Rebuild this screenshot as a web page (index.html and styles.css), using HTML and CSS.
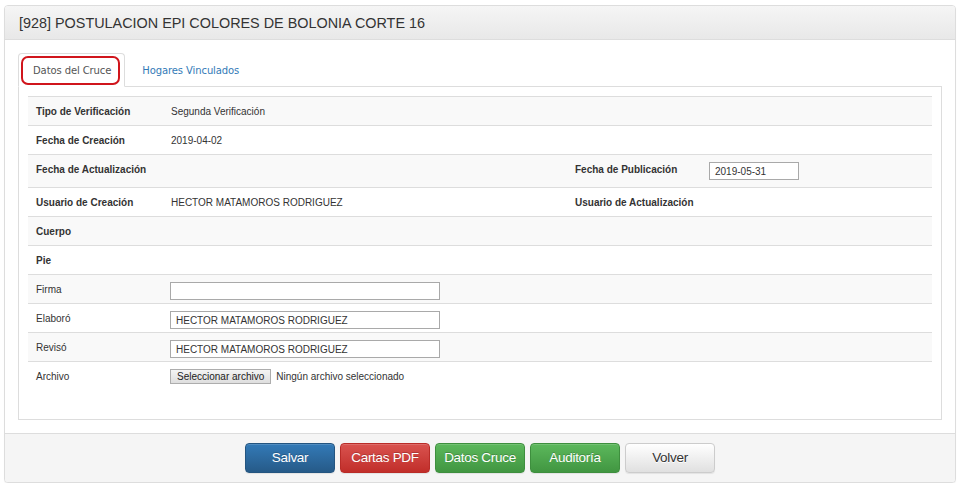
FILE: index.html
```html
<!DOCTYPE html>
<html lang="es">
<head>
<meta charset="utf-8">
<title>Postulación</title>
<link rel="stylesheet" href="styles.css">
</head>
<body>
<div class="panel">
  <div class="panel-heading">[928] POSTULACION EPI COLORES DE BOLONIA CORTE 16</div>
  <div class="panel-body">
    <ul class="tabs">
      <li class="tab active"><span class="tab-label">Datos del Cruce</span><span class="mark"></span></li>
      <li class="tab"><span class="tab-label link">Hogares Vinculados</span></li>
    </ul>
    <div class="tab-content">
      <table class="grid">
        <colgroup><col class="c1"><col class="c2"><col class="c3"><col class="c4"></colgroup>
        <tbody>
          <tr><th>Tipo de Verificación</th><td colspan="3">Segunda Verificación</td></tr>
          <tr><th>Fecha de Creación</th><td colspan="3">2019-04-02</td></tr>
          <tr class="tall"><th>Fecha de Actualización</th><td></td><th>Fecha de Publicación</th><td><input class="field date" type="text" value="2019-05-31"></td></tr>
          <tr><th>Usuario de Creación</th><td>HECTOR MATAMOROS RODRIGUEZ</td><th>Usuario de Actualización</th><td></td></tr>
          <tr><th>Cuerpo</th><td colspan="3"></td></tr>
          <tr><th>Pie</th><td colspan="3"></td></tr>
          <tr><td class="lbl">Firma</td><td colspan="3"><input class="field wide" type="text" value=""></td></tr>
          <tr><td class="lbl">Elaboró</td><td colspan="3"><input class="field wide" type="text" value="HECTOR MATAMOROS RODRIGUEZ"></td></tr>
          <tr><td class="lbl">Revisó</td><td colspan="3"><input class="field wide" type="text" value="HECTOR MATAMOROS RODRIGUEZ"></td></tr>
          <tr class="last"><td class="lbl">Archivo</td><td colspan="3"><span class="file-btn">Seleccionar archivo</span><span class="file-name">Ningún archivo seleccionado</span></td></tr>
        </tbody>
      </table>
    </div>
  </div>
  <div class="panel-footer">
    <button class="btn primary">Salvar</button>
    <button class="btn danger">Cartas PDF</button>
    <button class="btn success">Datos Cruce</button>
    <button class="btn success">Auditoría</button>
    <button class="btn default">Volver</button>
  </div>
</div>
</body>
</html>
```
FILE: styles.css
```css
* { box-sizing: border-box; }
html, body { margin: 0; padding: 0; background: #fff; }
body {
  padding: 5px 6px 0 4px;
  font-family: "Liberation Sans", Arial, sans-serif;
  color: #333;
}
.panel {
  border: 1px solid #ddd;
  border-radius: 4px;
  box-shadow: 0 1px 1px rgba(0,0,0,.05);
  background: #fff;
}
.panel-heading {
  height: 34px;
  padding: 0 14px;
  display: flex;
  align-items: center;
  font-size: 14.4px;
  color: #333;
  background: linear-gradient(#f5f5f5, #e8e8e8);
  border-bottom: 1px solid #ddd;
  border-radius: 3px 3px 0 0;
}
.panel-body {
  padding: 13px;
}
.tabs {
  list-style: none;
  margin: 0;
  padding: 0;
  display: flex;
  border-bottom: 1px solid #ddd;
  font-family: "DejaVu Sans", Verdana, sans-serif;
  font-size: 10px;
}
.tab {
  position: relative;
  height: 34px;
  margin-bottom: -1px;
  padding: 0 13px 0 14px;
  display: flex;
  align-items: center;
  border: 1px solid transparent;
  border-radius: 4px 4px 0 0;
}
.tab.active {
  border-color: #ddd;
  border-bottom-color: #fff;
  background: #fff;
  color: #555;
}
.tab + .tab { margin-left: 2px; padding-left: 14px; }
.tab-label.link { color: #337ab7; }
.tab-label { letter-spacing: -0.1px; }
.mark {
  position: absolute;
  left: 2px;
  top: 2px;
  width: 99px;
  height: 29px;
  border: 2px solid #d0151c;
  border-radius: 7px;
}
.tab-content {
  border: 1px solid #ddd;
  border-top: 0;
  padding: 9px;
}
.grid {
  width: 100%;
  border-collapse: collapse;
  table-layout: fixed;
  margin-bottom: 19px;
  font-size: 10px;
}
.c1 { width: 135px; }
.c2 { width: 404px; }
.c3 { width: 134px; }
.grid th, .grid td {
  text-align: left;
  vertical-align: top;
  padding: 8px 8px 6px;
  line-height: 14px;
  height: 29px;
  border-top: 1px solid #ddd;
  white-space: nowrap;
}
.grid th { font-weight: bold; color: #333; }
.grid td { font-weight: normal; color: #333; }
.grid tbody tr:nth-child(odd) { background: #f9f9f9; }
.grid tr.tall th, .grid tr.tall td { height: 33px; }
.field {
  display: block;
  height: 18px;
  padding: 0 5px;
  border: 1px solid #a9a9a9;
  font-family: "Liberation Sans", Arial, sans-serif;
  font-size: 10px;
  color: #333;
  background: #fff;
}
.field.date { width: 90px; margin-top: -1px; }
.field.wide { width: 270px; margin: -1px 0 -3px -1px; }
.file-btn {
  display: inline-block;
  vertical-align: top;
  height: 15px;
  line-height: 13px;
  padding: 0 6px;
  margin: -1px 0 0 -1px;
  border: 1px solid #adadad;
  background: linear-gradient(#f4f4f4, #dedede);
  color: #222;
}
.file-name { margin-left: 5px; }
.panel-footer {
  height: 49px;
  padding: 9px 0 0;
  text-align: center;
  background: #f5f5f5;
  border-top: 1px solid #ddd;
  border-radius: 0 0 3px 3px;
  font-size: 0;
}
.btn {
  display: inline-block;
  vertical-align: top;
  width: 90px;
  height: 30px;
  margin: 0 2.5px;
  padding: 0;
  border: 1px solid transparent;
  border-radius: 4px;
  font-family: "Liberation Sans", Arial, sans-serif;
  font-size: 13.5px;
  letter-spacing: -0.3px;
  white-space: nowrap;
  color: #fff;
  text-shadow: 0 -1px 0 rgba(0,0,0,.2);
  box-shadow: inset 0 1px 0 rgba(255,255,255,.15), 0 1px 1px rgba(0,0,0,.075);
  cursor: pointer;
}
.primary { background: linear-gradient(#337ab7, #265a88); border-color: #245580; }
.danger { background: linear-gradient(#d9534f, #c12e2a); border-color: #b92c28; }
.success { background: linear-gradient(#5cb85c, #419641); border-color: #3e8f3e; }
.default { background: linear-gradient(#fff, #e0e0e0); border-color: #ccc; color: #333; text-shadow: 0 1px 0 #fff; }
```
